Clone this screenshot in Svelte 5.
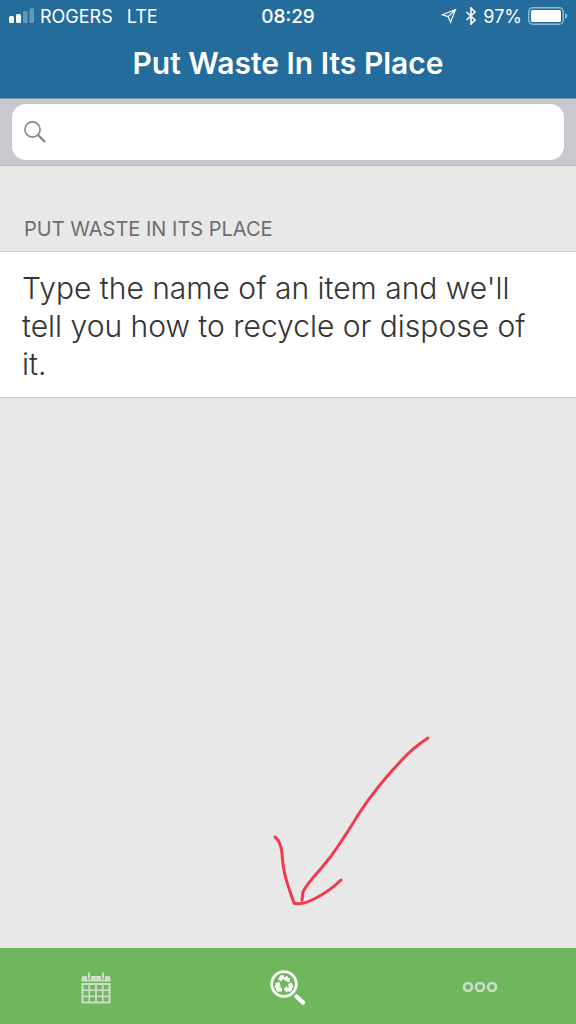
<script lang="ts">
  let query = $state('');

  const title = 'Put Waste In Its Place';

  // inner lines of the little calendar grid
  const cols = [1, 2, 3];
  const rows = [1, 2];
</script>

<div class="app">
  <header>
    <div class="status">
      <div class="carrier">
        <svg class="signal" viewBox="0 0 26 16" aria-hidden="true">
          <rect x="1" y="8" width="5" height="7" rx="1.5" />
          <rect x="8" y="6" width="5" height="9" rx="1.5" />
          <rect class="dim" x="15" y="3" width="4.5" height="12" rx="1.5" />
          <rect class="dim" x="21.5" y="0" width="4.5" height="15" rx="1.5" />
        </svg>
        <span>ROGERS</span>
        <span class="network">LTE</span>
      </div>
      <time>08:29</time>
      <div class="power">
        <svg class="location" viewBox="0 0 16 16" aria-hidden="true">
          <path d="M14.5 1.5 L1.5 6.8 L7.2 8.6 L9.6 14.2 Z M7.2 8.6 L14.5 1.5" />
        </svg>
        <svg class="bluetooth" viewBox="0 0 12 18" aria-hidden="true">
          <path d="M1.5 5 L10 13 L6 17 V1 L10 5 L1.5 13" />
        </svg>
        <span>97%</span>
        <svg class="battery" viewBox="0 0 40 18" aria-hidden="true">
          <rect class="shell" x="0.75" y="0.75" width="34.5" height="16.5" rx="4" />
          <rect x="3" y="3" width="30" height="12" rx="1.5" />
          <path class="cap" d="M37 6 Q39.5 7 39.5 9 Q39.5 11 37 12 Z" />
        </svg>
      </div>
    </div>
    <h1>{title}</h1>
  </header>

  <form class="search" role="search" onsubmit={(e) => e.preventDefault()}>
    <label class="field">
      <svg viewBox="0 0 22 22" aria-hidden="true">
        <circle cx="8.5" cy="8.5" r="7.6" />
        <path d="M14 14 L21 21" />
      </svg>
      <input type="search" aria-label="Search" bind:value={query} />
    </label>
  </form>

  <main>
    <h2>{title}</h2>
    <p class="hint">Type the name of an item and we'll tell you how to recycle or dispose of it.</p>
  </main>

  <nav>
    <button type="button" aria-label="Calendar">
      <svg class="calendar" viewBox="0 0 30 32" aria-hidden="true">
        <path class="top" d="M2 4 H28 Q29.5 4 29.5 6 V9.5 H0.5 V6 Q0.5 4 2 4 Z" />
        <path class="hole" d="M8 4 V7.5 M22 4 V7.5" />
        <path class="ring" d="M8 0.5 V6.5 M22 0.5 V6.5" />
        <path class="frame" d="M1.5 12 H28.5 V30.5 H1.5 Z" />
        {#each cols as col}
          <path class="line" d="M{1.5 + col * 6.75} 12 V30.5" />
        {/each}
        {#each rows as row}
          <path class="line" d="M1.5 {12 + row * 6.2} H28.5" />
        {/each}
      </svg>
    </button>

    <button type="button" class="active" aria-label="Search items">
      <svg class="lookup" viewBox="0 0 36 36" aria-hidden="true">
        <circle class="lens" cx="14" cy="14" r="12.3" />
        <path class="handle" d="M26.5 26.5 L33 32.5" />
        <g class="recycle">
          <path d="M9.6 10.4 L11.7 7.2 H14" />
          <path d="M15.2 6.8 L17.4 10.2" />
          <path d="M19.8 13.2 L21.1 16.2 L19.7 19.4 H16.8" />
          <path d="M12 19.4 H8.4 L7 16.4 L8.2 14.2" />
        </g>
        <g class="tips">
          <path d="M20 7.4 L19.6 12.4 L14.8 10.8 Z" />
          <path d="M17.2 15.8 V22.8 L13.4 19.3 Z" />
          <path d="M4.8 13.8 L9.4 11.8 L10.8 16.6 Z" />
        </g>
      </svg>
      <!-- hand-drawn pointer to the lookup tab -->
      <svg class="arrow" viewBox="0 0 160 172" aria-hidden="true">
        <path d="M156 2 C145 9 137 16 128 26 C111 44 98 61 88 76 C76 95 67 110 56 124 C46 137 35 147 31 156 L30 164" />
        <path d="M3 101 C7 104 9 109 10 117 C11 134 13 142 22 167 C27 169 34 167 42 163 C52 158 61 152 69 144" />
      </svg>
    </button>

    <button type="button" aria-label="More">
      <svg class="more" viewBox="0 0 36 12" aria-hidden="true">
        <circle cx="6" cy="5" r="4" />
        <circle cx="18" cy="5" r="4" />
        <circle cx="30" cy="5" r="4" />
      </svg>
    </button>
  </nav>
</div>

<style>
  :global(body) {
    margin: 0;
    background: #e8e8e8;
  }

  .app {
    display: flex;
    flex-direction: column;
    min-height: 100vh;
    font-family: Inter, 'Liberation Sans', sans-serif;
  }

  svg {
    display: block;
    flex: none;
  }

  header {
    background: #246c9b;
    color: #fff;
    border-bottom: 1px solid #7c94a8;
    padding-bottom: 14px;
  }

  .status {
    display: grid;
    grid-template-columns: 1fr auto 1fr;
    align-items: center;
    height: 32px;
    padding: 0 8px;
    font-size: 18px;
  }

  .carrier,
  .power {
    display: flex;
    align-items: center;
    gap: 6px;
  }

  .power {
    justify-content: flex-end;
  }

  .signal {
    width: 26px;
    height: 16px;
    fill: #fff;
  }

  .signal .dim {
    opacity: 0.3;
  }

  .network {
    margin-left: 8px;
  }

  time {
    font-size: 19px;
    font-weight: 500;
  }

  .location {
    width: 16px;
    height: 16px;
    fill: none;
    stroke: #fff;
    stroke-width: 1.2;
  }

  .bluetooth {
    width: 12px;
    height: 18px;
    margin-left: 2px;
    fill: none;
    stroke: #fff;
    stroke-width: 1.6;
  }

  .battery {
    width: 40px;
    height: 18px;
    fill: #fff;
  }

  .battery .shell {
    fill: none;
    stroke: #8fb8d3;
    stroke-width: 1.5;
  }

  .battery .cap {
    fill: #8fb8d3;
  }

  h1 {
    margin: 0;
    padding-top: 10px;
    font-size: 30px;
    line-height: 42px;
    font-weight: 600;
    text-align: center;
  }

  .search {
    padding: 5px 12px;
    background: #c9c8cf;
    border-bottom: 1px solid #b9b8bf;
  }

  .field {
    display: flex;
    align-items: center;
    gap: 10px;
    height: 56px;
    padding: 0 12px;
    background: #fff;
    border-radius: 14px;
  }

  .field svg {
    width: 22px;
    height: 22px;
    fill: none;
    stroke: #8a8a8e;
    stroke-width: 1.6;
  }

  .field path {
    stroke-width: 2.4;
  }

  input {
    flex: 1;
    min-width: 0;
    border: 0;
    outline: 0;
    background: none;
    font: inherit;
    font-size: 30px;
    appearance: none;
  }

  main {
    flex: 1;
  }

  h2 {
    margin: 0;
    padding: 50px 24px 9px;
    font-size: 20px;
    line-height: 26px;
    font-weight: 400;
    text-transform: uppercase;
    color: #6d6d72;
  }

  .hint {
    margin: 0;
    padding: 17px 22px 14px;
    border: solid #cbcacd;
    border-width: 1px 0;
    background: #fff;
    color: #333;
    font-size: 30px;
    line-height: 38px;
    font-weight: 300;
  }

  nav {
    display: grid;
    grid-template-columns: repeat(3, 1fr);
    height: 76px;
    background: #6eb75c;
  }

  button {
    position: relative;
    display: flex;
    align-items: center;
    justify-content: center;
    padding: 4px 0 0;
    border: 0;
    background: none;
    color: #cfdccb;
  }

  .active {
    color: #fff;
  }

  .calendar {
    width: 30px;
    height: 32px;
    fill: none;
    stroke: currentColor;
    stroke-width: 2;
  }

  .calendar .top {
    fill: currentColor;
    stroke: none;
  }

  .calendar .hole {
    stroke: #6eb75c;
    stroke-width: 4;
  }

  .calendar .line {
    stroke-width: 1.7;
  }

  .lookup {
    width: 36px;
    height: 36px;
    fill: none;
    stroke: currentColor;
  }

  .lens {
    stroke-width: 2.8;
  }

  .handle {
    stroke-width: 4.4;
    stroke-linecap: round;
  }

  .recycle {
    stroke-width: 4;
  }

  .tips {
    fill: currentColor;
    stroke: none;
  }

  .more {
    width: 36px;
    height: 12px;
    fill: none;
    stroke: currentColor;
    stroke-width: 2.6;
  }

  .arrow {
    position: absolute;
    left: calc(50% - 16px);
    bottom: 116px;
    width: 160px;
    height: 172px;
    fill: none;
    stroke: #f5384c;
    stroke-width: 3;
    stroke-linecap: round;
    stroke-linejoin: round;
    pointer-events: none;
  }
</style>
